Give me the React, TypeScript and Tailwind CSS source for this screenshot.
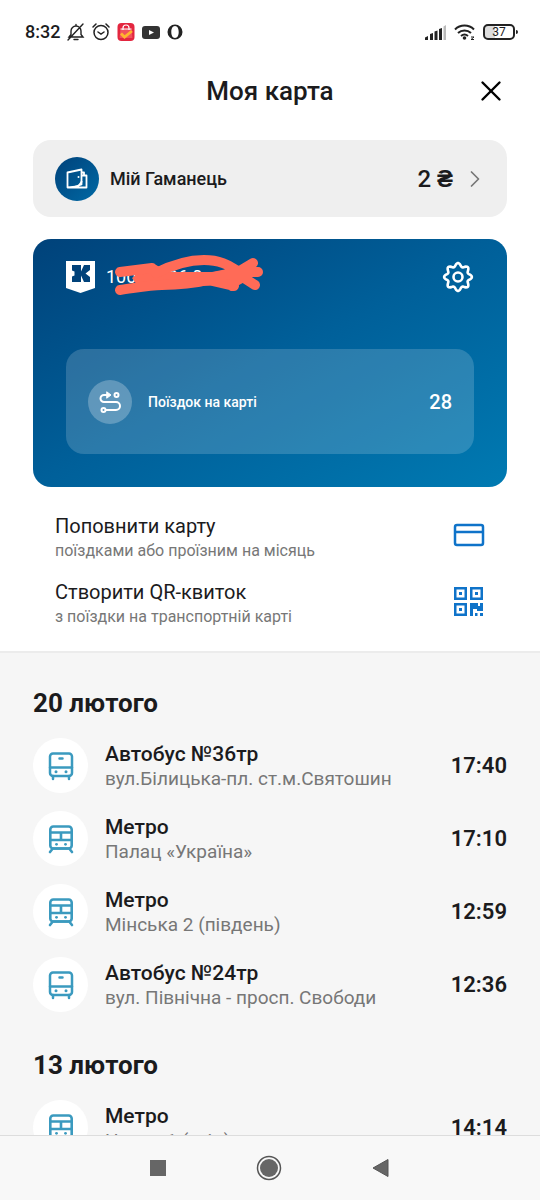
import { useId } from "react";
import { ChevronRight, X } from "lucide-react";

type Trip = {
  kind: "bus" | "metro";
  title: string;
  place: string;
  time: string;
};

const days: { date: string; trips: Trip[] }[] = [
  {
    date: "20 лютого",
    trips: [
      { kind: "bus", title: "Автобус №36тр", place: "вул.Білицька-пл. ст.м.Святошин", time: "17:40" },
      { kind: "metro", title: "Метро", place: "Палац «Україна»", time: "17:10" },
      { kind: "metro", title: "Метро", place: "Мінська 2 (південь)", time: "12:59" },
      { kind: "bus", title: "Автобус №24тр", place: "вул. Північна - просп. Свободи", time: "12:36" },
    ],
  },
  {
    date: "13 лютого",
    trips: [{ kind: "metro", title: "Метро", place: "Нивки 1 (схід)", time: "14:14" }],
  },
];

const BusIcon = () => (
  <svg width="26" height="30" viewBox="0 0 26 30" fill="none" stroke="#3b9abf" strokeWidth="2.5" strokeLinecap="round">
    <rect x="2" y="2.5" width="22" height="22.5" rx="3" />
    <path d="M2 16.500h22M11.500 7.500h3M5 25v3M21 25v3" />
    <circle cx="8" cy="20.8" r="1.5" fill="#3b9abf" stroke="none" />
    <circle cx="18" cy="20.8" r="1.5" fill="#3b9abf" stroke="none" />
  </svg>
);

const MetroIcon = () => (
  <svg width="26" height="30" viewBox="0 0 26 30" fill="none" stroke="#3b9abf" strokeWidth="2.6" strokeLinecap="round">
    <rect x="2.3" y="2.500" width="21.4" height="22" rx="3" />
    <path d="M2.500 8.500h21M2.500 16h21M13 8.500V16M4 25.500 2 28M22 25.500l2 2.500M5 24.500h16" />
    <circle cx="8.500" cy="20.300" r="1.400" fill="#3b9abf" stroke="none" />
    <circle cx="17.500" cy="20.300" r="1.400" fill="#3b9abf" stroke="none" />
  </svg>
);

const StatusBar = () => {
  return (
    <div className="flex h-16 shrink-0 items-center justify-between pr-[22px] pl-[25px]">
      <div className="flex items-center gap-[7px]">
        <span className="text-lg font-medium">8:32</span>
        <svg width="18" height="18" viewBox="0 0 18 18" fill="none" stroke="#222" strokeWidth="1.4" strokeLinecap="round">
          <path d="M2 14h14l-2-2.500V8a5 5 0 0 0-10 0v3.500ZM9 3V1.500M1 17 16 1M7 16.500h4" />
        </svg>
        <svg width="18" height="18" viewBox="0 0 18 18" fill="none" stroke="#222" strokeWidth="1.5" strokeLinecap="round">
          <circle cx="9" cy="9.5" r="7" />
          <path d="M6 9l3 2 3-2M1 4l3-3M17 4l-3-3" />
        </svg>
        <svg width="18" height="18" viewBox="0 0 17 18" fill="none">
          <rect width="17" height="18" rx="4" fill="#e3263f" />
          <path d="M3 6h11l1 9H2Z" fill="#f0525c" />
          <path d="M5.500 7V5a3 3 0 0 1 6 0v2M3 6h11" stroke="#fff" strokeWidth="1.200" />
          <path d="M3.500 10.500 7 14l7.500-6" stroke="#ffb52e" strokeWidth="2.800" />
        </svg>
        <svg width="18" height="13" viewBox="0 0 18 13">
          <rect width="18" height="13" rx="3" fill="#333" />
          <path d="M7 4v5l5-2.500Z" fill="#fff" />
        </svg>
        <svg width="16" height="16" viewBox="0 0 16 16">
          <path
            fillRule="evenodd"
            fill="#222"
            d="M8 0.500a7.500 7.500 0 1 0 0 15a7.500 7.500 0 1 0 0-15ZM8 2c2.500 0 3.700 2.800 3.700 6s-1.200 6-3.700 6S4.300 11.200 4.300 8s1.200-6 3.700-6Z"
          />
        </svg>
      </div>
      <div className="flex items-center gap-2">
        <svg width="21" height="15" viewBox="0 0 21 15" fill="#222">
          <path d="M0 12.500 3 11v4H0ZM5 9l3-1v7H5ZM9.500 6.500l3-1V15h-3ZM14 4l3-1v12h-3Z" />
          <path d="M18.500 1.500 21 0v15h-2.500Z" fill="#bbb" />
        </svg>
        <svg width="21" height="16" viewBox="0 0 21 16" fill="none" stroke="#222" strokeWidth="2">
          <path d="M1 5.500a13.500 13.500 0 0 1 19 0M4 9a9.500 9.500 0 0 1 13 0M7 12a5.500 5.500 0 0 1 7 0" />
          <circle cx="10.500" cy="14" r="1.800" fill="#222" stroke="none" />
          <path d="M17 13h3l-3 2.500h3" strokeWidth="1" />
        </svg>
        <div className="flex items-center gap-px">
          <div className="flex h-4 w-8 items-center justify-center rounded-[5px] border-2 border-[#222] bg-linear-to-r from-[#ddd] from-35% to-white to-35% text-xs">
            37
          </div>
          <div className="h-1 w-0.5 rounded-r bg-[#222]" />
        </div>
      </div>
    </div>
  );
};

const WalletIcon = () => (
  <svg width="24" height="24" viewBox="0 0 24 24" fill="none" stroke="#fff" strokeWidth="1.800" strokeLinejoin="round">
    <path d="M2.500 5.500 16.500 2.500v12.500L13 19.500l-10.500 1ZM16.500 8.500h5v12h-19M19 8.500v-3h-2.500" />
    <path d="M9 20l7.500-2.500V14" />
    <circle cx="13.500" cy="10" r="1" fill="#fff" stroke="none" />
  </svg>
);

const WalletRow = () => {
  return (
    <button className="flex h-[77px] w-full shrink-0 items-center rounded-[18px] bg-[#efefef] pr-[18px] pl-[22px] text-left">
      <span className="flex size-11 items-center justify-center rounded-full bg-linear-to-br from-[#00427a] to-[#0069a5]">
        <WalletIcon />
      </span>
      <span className="ml-[11px] flex-1 text-lg font-medium">Мій Гаманець</span>
      <span className="text-2xl font-medium">
        2 <span className="font-bold">₴</span>
      </span>
      <ChevronRight className="ml-2 size-7 text-[#777]" strokeWidth={1.5} />
    </button>
  );
};

// wavy outline with eight rounded teeth
const gearPath =
  "M" +
  Array.from({ length: 96 }, (_, i) => {
    const a = (i / 96) * Math.PI * 2;
    const r = 12.2 + 1.7 * Math.cos(a * 8);
    return `${(16 + r * Math.sin(a)).toFixed(2)} ${(16 - r * Math.cos(a)).toFixed(2)}`;
  }).join("L") +
  "Z";

const TransportCard = () => {
  const titleId = useId();

  return (
    <section className="mt-[22px] h-[248px] rounded-[18px] bg-linear-to-br from-[#00427a] via-[#00609a] to-[#007ab2] px-[33px] pt-[18px] text-white">
      <div className="flex h-10 items-center">
        <svg width="30" height="34" viewBox="0 0 30 34">
          <path d="M0 1h29v27l-14.500 5L0 28Z" fill="#fff" />
          <path d="M6 5h9v6.500L18 5h6v5l-4.500 3.500L24 17v5h-6l-3-6.500V22H6v-5.500l2.500-1v-4L6 10.500Z" fill="#00427a" />
        </svg>
        <div className="relative ml-2.5 flex-1 text-lg">
          100 &nbsp; &nbsp; &nbsp; 06 0
          <svg className="absolute -top-2 left-1" width="160" height="44" viewBox="0 0 160 44" aria-labelledby={titleId}>
            <title id={titleId}>Номер приховано</title>
            <path d="M22 23 38 10 46 10 60 17 104 17 132 12 138 25 122 34 104 30 60 34 30 34Z" fill="#ff6b57" />
            <path
              d="M10 17 42 13M10 35C25 33 40 30 52 30s30-1 46-5l26 6M46 18C62 10 78 5 94 5s24 5 32 10M98 23l30-6 15-9M128 17h20M128 19l17 11M122 31l6-12"
              fill="none"
              stroke="#ff6b57"
              strokeWidth="10"
              strokeLinecap="round"
              strokeLinejoin="round"
            />
          </svg>
        </div>
        <button aria-label="Налаштування">
          <svg width="32" height="32" viewBox="0 0 32 32" fill="none" stroke="#fff" strokeWidth="2.600" strokeLinejoin="round">
            <path d={gearPath} />
            <circle cx="16" cy="16" r="4.500" />
          </svg>
        </button>
      </div>
      <div className="mt-[52px] flex h-[105px] items-center rounded-[18px] bg-white/17 px-[22px]">
        <span className="flex size-11 items-center justify-center rounded-full bg-white/25">
          <svg width="22" height="22" viewBox="0 0 22 22" fill="none" stroke="#fff" strokeWidth="2" strokeLinecap="round">
            <path d="M9 4H5a3.500 3.500 0 0 0 0 7h12a3.500 3.500 0 0 1 0 8H7" />
            <path d="M8 1l4 3-4 3Z" fill="#fff" strokeWidth="1" strokeLinejoin="round" />
            <circle cx="17.500" cy="4" r="2" />
            <circle cx="4.500" cy="19" r="2" />
          </svg>
        </span>
        <span className="ml-4 flex-1 text-sm font-medium">Поїздок на карті</span>
        <span className="text-xl font-medium">28</span>
      </div>
    </section>
  );
};

const CardIcon = () => (
  <svg width="32" height="24" viewBox="0 0 32 24" fill="none" stroke="#0f73c9" strokeWidth="2.500">
    <rect x="2" y="2" width="28" height="20" rx="2" />
    <path d="M2 9h28" />
  </svg>
);

const QrIcon = () => (
  <svg width="32" height="32" viewBox="0 0 32 32" fill="#0f73c9">
    <path
      fillRule="evenodd"
      d="M1 2h13v13H1ZM3.500 4.500v8h8v-8ZM17 2h13v13H17ZM19.500 4.500v8h8v-8ZM1 18h13v13H1ZM3.500 20.500v8h8v-8Z"
    />
    <path d="M6 7h3v3H6ZM22 7h3v3h-3ZM6 23h3v3H6ZM17 18h8v3h2v-3h3v8h-6v-2h-4v7h-3ZM22 28h2.500v3H22ZM27 28h3v3h-3Z" />
  </svg>
);

const actions = [
  { title: "Поповнити карту", note: "поїздками або проїзним на місяць", Icon: CardIcon },
  { title: "Створити QR-квиток", note: "з поїздки на транспортній карті", Icon: QrIcon },
];

const TripRow = ({ trip }: { trip: Trip }) => {
  return (
    <li className="flex h-[55px] items-center">
      <span className="flex size-[55px] shrink-0 items-center justify-center rounded-full bg-white">
        {trip.kind === "bus" ? <BusIcon /> : <MetroIcon />}
      </span>
      <div className="ml-[17px] flex-1">
        <p className="text-[21px] leading-[26px] font-medium">{trip.title}</p>
        <p className="text-[19px] leading-6 text-[#777]">{trip.place}</p>
      </div>
      <span className="text-[22px] font-semibold">{trip.time}</span>
    </li>
  );
};

const App = () => {
  return (
    <div className="flex h-screen flex-col overflow-hidden bg-white font-[Roboto,sans-serif] text-[#1b1b1d]">
      <StatusBar />
      <header className="grid h-[54px] shrink-0 grid-cols-[1fr_auto_1fr] items-center px-8">
        <h1 className="col-start-2 text-[26px] font-medium">Моя карта</h1>
        <button aria-label="Закрити" className="justify-self-end">
          <X className="size-[34px] text-black" strokeWidth={1.7} />
        </button>
      </header>

      <div className="shrink-0 px-[33px] pt-[22px]">
        <WalletRow />
        <TransportCard />
        <div className="mt-[26px] mb-[22px] flex flex-col gap-4 px-[22px]">
          {actions.map(({ title, note, Icon }) => (
            <button key={title} className="flex items-center justify-between text-left">
              <span>
                <span className="block text-xl leading-[26px]">{title}</span>
                <span className="block text-base leading-6 text-[#777]">{note}</span>
              </span>
              <span className="pb-1.5">
                <Icon />
              </span>
            </button>
          ))}
        </div>
      </div>

      <main className="min-h-0 flex-1 overflow-hidden border-t-2 border-[#ececec] bg-[#f6f6f6] px-[33px] pt-8">
        {days.map((day) => (
          <section key={day.date} className="mb-[35px]">
            <h2 className="text-[26px] leading-9 font-bold">{day.date}</h2>
            <ul className="mt-[17px] flex flex-col gap-[18px]">
              {day.trips.map((trip) => (
                <TripRow key={trip.time} trip={trip} />
              ))}
            </ul>
          </section>
        ))}
      </main>

      <nav className="flex h-[65px] shrink-0 items-center justify-center gap-[90px] border-t border-[#ddd] bg-[#f8f8f8]">
        <button aria-label="Останні програми" className="size-4 bg-[#666]" />
        <button aria-label="Головний екран">
          <svg width="26" height="26" viewBox="0 0 26 26">
            <circle cx="13" cy="13" r="11.500" fill="none" stroke="#555" strokeWidth="1.500" />
            <circle cx="13" cy="13" r="9" fill="#666" />
          </svg>
        </button>
        <button aria-label="Назад">
          <svg width="18" height="20" viewBox="0 0 18 20">
            <path d="M1 10 16 1.500v17Z" fill="#666" stroke="#555" strokeLinejoin="round" />
          </svg>
        </button>
      </nav>
    </div>
  );
};

export default App;
